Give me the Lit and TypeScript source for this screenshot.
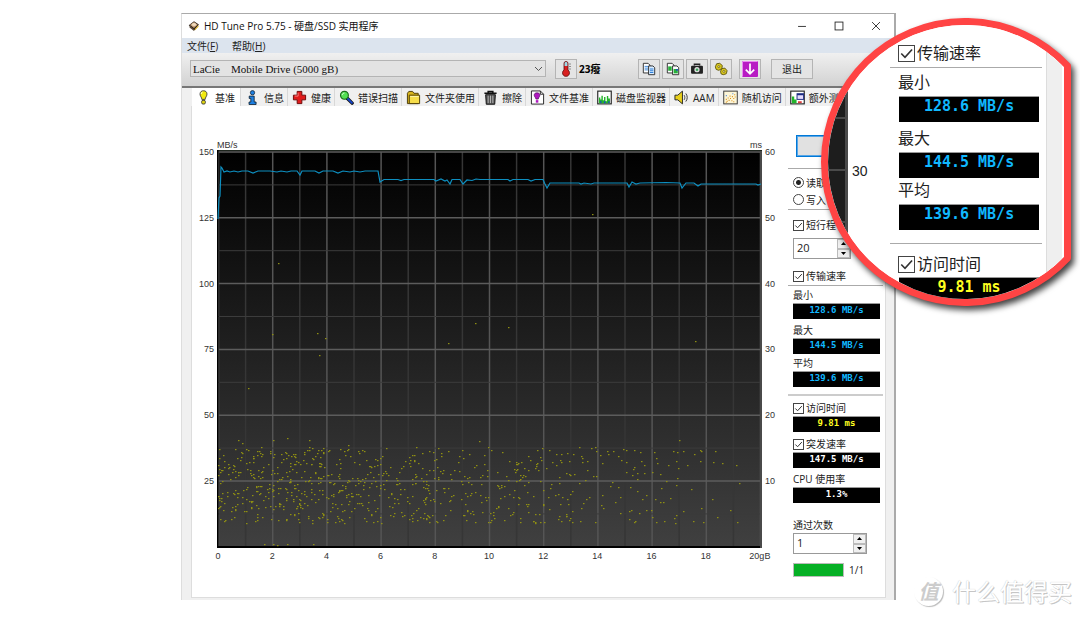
import { LitElement, html, svg, css, nothing } from "lit";
import { customElement, property } from "lit/decorators.js";
import { classMap } from "lit/directives/class-map.js";

/* ---------- icons, drawn on a 16 x 16 grid ---------- */

const icons: Record<string, unknown> = {
  app: svg`<path d="M1 7 8 1.5 14.5 6 8.5 14z" fill="#2c2118"/><path d="M2.6 6.8 8 2.8 13 6.2 8 10.6z" fill="#c9a27a"/><ellipse cx="8" cy="6" rx="2.8" ry="2" fill="#f0dcc0"/><path d="M2 8 8 12v2.5L2 10z" fill="#5b4a3a"/><path d="M9 12l5-5v2L9 14z" fill="#e0b429"/>`,
  bulb: svg`<path d="M8 .8c2.4 0 3.7 1.5 3.7 3.5 0 1.8-1 2.8-1.6 4.2-.3.8-.3 1.5-.3 1.5H6.2s0-.7-.3-1.5C5.300 7.1 4.300 6.1 4.300 4.300 4.300 2.300 5.600.8 8 .8z" fill="#f2ea10" stroke="#333" stroke-width=".9"/><path d="M7 2.2c-1 .3-1.5 1-1.5 2" stroke="#fff" fill="none"/><rect x="6" y="11" width="4" height="4" rx="1.5" fill="#e0d510" stroke="#333" stroke-width=".9"/>`,
  info: svg`<circle cx="8" cy="2.9" r="2.3" fill="#1d7fe0" stroke="#123" stroke-width=".8"/><path d="M4.5 6.500h5.300v6.300h2v2.700H4.300v-2.700h1.900V9H4.500z" fill="#1d7fe0" stroke="#123" stroke-width=".9"/>`,
  cross: svg`<path d="M5.500 1.500h5v4h4v5h-4v4h-5v-4h-4v-5h4z" fill="#e01c1c" stroke="#6a0808"/><path d="M6.500 3v3.500H3" stroke="#ff8080" fill="none"/>`,
  search: svg`<path d="M8.500 8.500 14 14" stroke="#111" stroke-width="3.6" stroke-linecap="round"/><path d="M9 9 13.800 13.800" stroke="#1848d0" stroke-width="2" stroke-linecap="round"/><circle cx="5.8" cy="5.6" r="4.2" fill="#52e052" stroke="#1c6a1c" stroke-width="1.2"/><path d="M3.500 5.500c0-1.400 1-2.200 2.200-2.200" stroke="#eaffea" fill="none"/>`,
  folder: svg`<path d="M1.500 14.500v-11l1.500-2h4l1.500 2H13v11z" fill="#d9b51c" stroke="#4a3a05"/><path d="M3.500 5.500h11v9h-11z" fill="#f6dd4a" stroke="#4a3a05"/><path d="M4.500 7h9" stroke="#fff6b0"/>`,
  trash: svg`<path d="M1.500 3.500h13M5.500 3V1.500h5V3" stroke="#111" stroke-width="1.6" fill="none"/><path d="M2.800 5h10.400l-.7 10.200h-9z" fill="#555" stroke="#111"/><path d="M5.500 6v8M8 6v8M10.500 6v8" stroke="#bbb" stroke-width="1"/>`,
  filebench: svg`<path d="M1.500 1h9.500l3.500 3.500V15h-13z" fill="#fff" stroke="#222"/><path d="M11 1v3.500h3.500" fill="none" stroke="#222"/><path d="M7.500 3c2.200 0 3 1.200 3 2.600 0 1.700-1.500 2.200-1.700 4.100H6.300c-.2-1.900-1.800-2.400-1.800-4.100C4.500 4.200 5.300 3 7.500 3z" fill="#b018c0" stroke="#4a0a52" stroke-width=".7"/><rect x="6.2" y="10.8" width="2.7" height="2.7" fill="#b018c0"/>`,
  monitor: svg`<rect x=".8" y="1.2" width="14.4" height="13.6" fill="#fff" stroke="#222" stroke-width="1.2"/><path d="M2 14V8h1.500v2h1.200V6h1.500v5h1.300V7.500H9V12h1.500V6.500H12V9h1.800v5z" fill="#23b52b"/><path d="M3.500 14v-2.500h1.200V14M7.500 14v-2H9v2M12 14v-2h1.300v2" fill="#1848c8"/>`,
  speaker: svg`<path d="M1 5.500h3L9 1.200v13.600L4 10.500H1z" fill="#e8cf1a" stroke="#222"/><path d="M10.800 5.500c1 1.500 1 3.500 0 5M12.600 3.700c2 2.600 2 6 0 8.600" stroke="#333" fill="none"/>`,
  scatter: svg`<rect x=".8" y="1.2" width="14.4" height="13.6" fill="#fdf6d8" stroke="#333"/><path d="M3 10h1M4 12h1M6 11h1M5 8.500h1M7.500 9h1M9 11.500h1M9.500 7h1M11 9h1M12 5h1M12.500 7.500h1M7 6.500h1M3 13h1M11 12.500h1" stroke="#d78a10" stroke-width="1.2"/><path d="M3 6h1M10 4h1" stroke="#3a7de0" stroke-width="1.2"/>`,
  extra: svg`<rect x=".8" y="1.2" width="14.4" height="13.6" fill="#fff" stroke="#222" stroke-width="1.2"/><path d="M2 14V7h2.500v3H7v4z" fill="#23b52b"/><rect x="7.5" y="4" width="7" height="6" fill="#e6dcff" stroke="#1a2a80"/><path d="M7.500 4.800h7" stroke="#1a2a80" stroke-width="1.6"/><path d="M8.500 12h4v2h-4z" fill="#e03c3c"/>`,
  thermo: svg`<path d="M6 2.500a2 2 0 0 1 4 0V9a3.500 3.500 0 1 1-4 0z" fill="#d82020" stroke="#5c1010" stroke-width=".8"/><path d="M6.600 2.500a1.400 1.400 0 0 1 2.800 0V5H6.600z" fill="#9adbe8"/><path d="M11 3h2M11 5.500h2M11 8h2" stroke="#777" stroke-width=".8"/>`,
  copy: svg`<path d="M1.500 1.500h5.500l2 2v9h-7.500z" fill="#fff" stroke="#222"/><path d="M3 5h4M3 7h4M3 9h4" stroke="#2f7fd8"/><path d="M7.500 4.500h5l2 2v8h-7z" fill="#d9ecff" stroke="#222"/><path d="M9 8h4M9 10h4M9 12h4" stroke="#2f7fd8" stroke-width="1.2"/>`,
  copyimg: svg`<path d="M1.500 1.500h5.500l2 2v9h-7.500z" fill="#fff" stroke="#222"/><path d="M2.500 5h4v5h-4z" fill="#27b03a"/><path d="M7.500 4.500h5l2 2v8h-7z" fill="#fff" stroke="#222"/><path d="M8.700 8h4.800v5H8.700z" fill="#27b03a"/><path d="M11.500 8h2v2h-2z" fill="#1c50c0"/>`,
  camera: svg`<path d="M5 4V2.500h6V4" fill="none" stroke="#222" stroke-width="1.6"/><rect x="1.2" y="4.2" width="13.6" height="9.3" rx="1.2" fill="#222"/><circle cx="8" cy="8.8" r="3" fill="#ddd"/><circle cx="8" cy="8.8" r="1.5" fill="#3aa85a"/>`,
  gears: svg`<g stroke="#5b5208" fill="#d8c61e"><path d="M1.500 5.500 3 2l3.500-.5L9.500 4 9 7.500 5.500 9.500 2.500 8.500z"/><path d="M7.500 10.500 9 7.500l3.500-.5 2.500 3-1 3.500-3.500 1L8 13.500z"/></g><circle cx="5.5" cy="5.3" r="1.1" fill="#fff8c0" stroke="#5b5208" stroke-width=".8"/><circle cx="11.3" cy="10.8" r="1.1" fill="#fff8c0" stroke="#5b5208" stroke-width=".8"/>`,
  down: svg`<rect width="16" height="16" rx="1" fill="#b81cc4"/><path d="M.5 15.500V.5h15" stroke="#e98af0" fill="none"/><path d="M8 2.500v10M3.800 8.600 8 12.800l4.200-4.200" stroke="#fff" stroke-width="1.7" fill="none"/>`,
  minimize: svg`<path d="M3.500 8.500h9" stroke="#222"/>`,
  maximize: svg`<rect x="3.5" y="3.5" width="9" height="9" fill="none" stroke="#222"/>`,
  close: svg`<path d="M3.500 3.500l9 9M12.500 3.500l-9 9" stroke="#222" fill="none"/>`,
};

const icon = (name: string) =>
  html`<svg class="icon" viewBox="0 0 16 16" aria-hidden="true">${icons[name]}</svg>`;

const controls = css`
  * {
    box-sizing: border-box;
  }
  .icon {
    display: block;
    flex: none;
    width: 15px;
    height: 15px;
  }
  .check {
    display: flex;
    align-items: center;
    gap: 2px;
    white-space: nowrap;
  }
  .check input {
    appearance: none;
    flex: none;
    width: 11px;
    height: 11px;
    margin: 0;
    border: 1px solid #444;
    background: #fff;
  }
  .check input[type="checkbox"]:checked {
    background: #fff
      url("data:image/svg+xml,%3Csvg xmlns='http://www.w3.org/2000/svg' viewBox='0 0 10 10'%3E%3Cpath d='M1.5 5 4 7.5 8.7 2.3' fill='none' stroke='%23333' stroke-width='1.1'/%3E%3C/svg%3E")
      center / 100% 100%;
  }
  .check input[type="radio"] {
    border-radius: 50%;
  }
  .check input[type="radio"]:checked {
    background: radial-gradient(circle, #222 0 2px, #fff 3px);
  }
  .rule {
    width: 100%;
    height: 1px;
    margin: 0;
    border: 0;
    background: #aaa;
  }
  .reading {
    display: block;
    background: #000;
    border-top: 1px solid #999;
    font-family: "DejaVu Sans Mono", monospace;
    font-weight: bold;
    text-align: center;
    white-space: nowrap;
    color: #10b8ff;
  }
  .reading.yellow {
    color: #ffff20;
  }
  .reading.white {
    color: #fff;
  }
`;

/* ---------- benchmark chart ---------- */

const trace: [number, number][] = [
  [1, 69], [2, 48], [3, 46], [4, 17], [5, 18], [7, 22], [10, 21], [13, 22], [17, 21], [21, 22], [25, 21],
  [31, 21], [36, 23], [41, 21], [53, 21], [60, 22], [64, 21], [70, 22], [74, 21], [80, 21], [83, 25], [85, 21],
  [98, 21], [102, 23], [106, 21], [116, 21], [121, 23], [126, 21], [133, 22], [137, 21], [143, 22], [148, 21],
  [161, 21], [163, 32], [167, 29.5], [181, 29.5], [184, 30.5], [187, 29.5], [217, 29.5], [219, 31], [224, 29],
  [228, 31], [230, 30], [233, 34], [235, 29.5], [243, 29.5], [246, 34], [250, 30], [255, 30.5], [259, 29],
  [263, 29.5], [291, 29.5], [293, 31], [296, 29.5], [311, 29.5], [314, 31], [318, 29.5], [326, 29.5],
  [328, 34], [330, 38], [333, 33], [362, 33], [364, 34], [367, 33], [374, 34], [377, 33], [410, 33], [412, 37],
  [415, 32], [419, 34], [423, 33], [449, 32.5], [463, 33], [465, 38], [469, 33], [477, 33], [481, 36], [484, 34],
  [539, 34], [541, 35], [544, 34],
];

const strays: [number, number][] = [
  [61, 113], [375, 64], [55, 184], [100, 183], [108, 188], [102, 205], [258, 173], [291, 177], [231, 193],
  [478, 191], [31, 238], [47, 394], [56, 394], [60, 395], [70, 394], [96, 394], [21, 290], [25, 293],
  [56, 290], [70, 288], [92, 290], [131, 295], [262, 291], [462, 290], [362, 297], [378, 297], [437, 302],
];

/* access-time samples per band: from, to, count */
const bands: [number, number, number][] = [
  [1, 54, 140], [54, 110, 160], [110, 163, 120], [163, 218, 110], [218, 272, 75],
  [272, 327, 85], [327, 381, 56], [381, 436, 44], [436, 490, 32], [490, 526, 9],
];

function accessSamples(): [number, number][] {
  let seed = 20;
  const next = () => {
    seed = (seed * 16807) % 2147483647;
    return seed / 2147483647;
  };
  const out: [number, number][] = [];
  for (const [from, to, count] of bands) {
    for (let i = 0; i < count; i++) {
      out.push([from + next() * (to - from), 297 + Math.pow(next(), 0.95) * 76]);
    }
  }
  return out;
}

@customElement("benchmark-chart")
export class BenchmarkChart extends LitElement {
  static styles = css`
    :host {
      display: grid;
      grid-template-columns: 22px minmax(0, 1fr) 11px;
      grid-template-rows: 10px 398px 14px;
      column-gap: 3px;
      font: 9px/10px "Liberation Sans", Arial, sans-serif;
      color: #333;
    }
    .units {
      grid-column: 2;
      display: flex;
      justify-content: space-between;
    }
    .scale {
      display: flex;
      flex-direction: column;
      justify-content: space-between;
      margin: -3px 0 -4px;
    }
    .left {
      grid-column: 1;
      text-align: right;
    }
    .scale span {
      height: 10px;
    }
    svg {
      display: block;
      width: 100%;
      height: 100%;
    }
    .distance {
      grid-column: 2;
      display: flex;
      justify-content: space-between;
      padding: 3px 2px 0 1px;
    }
    .distance span {
      display: flex;
      justify-content: center;
      width: 0;
      white-space: nowrap;
    }
  `;

  private samples = accessSamples();

  render() {
    const cols = Array.from({ length: 21 }, (_, i) => i);
    const rows = Array.from({ length: 13 }, (_, i) => i);
    return html`
      <div class="units"><span>MB/s</span><span>ms</span></div>
      <div class="scale left">
        ${[150, 125, 100, 75, 50, 25, ""].map((v) => html`<span>${v}</span>`)}
      </div>
      <svg viewBox="0 0 545 398" preserveAspectRatio="none" role="img" aria-label="MB/s">
        <defs>
          <linearGradient id="bg" x1="0" y1="0" x2="0" y2="1">
            <stop offset="0" stop-color="#000" />
            <stop offset="1" stop-color="#404040" />
          </linearGradient>
        </defs>
        <rect width="545" height="398" fill="url(#bg)" />
        ${cols.map((i) => {
          const x = 1.5 + i * 27.1;
          return svg`<line x1=${x} x2=${x} y1="2" y2="397" stroke=${i % 2 ? "#363636" : "#555"} stroke-width="1.5"/>`;
        })}
        ${rows.map((i) => {
          const y = 2 + i * 32.9;
          return svg`<line x1="1" x2="545" y1=${y} y2=${y} stroke=${i % 2 ? "#3c3c3c" : "#5c5c5c"} stroke-width=${i % 2 ? 1 : 1.5}/>`;
        })}
        <path d="M0 .5H545" stroke="#1c241c" />
        <path d="M.5 0V398M0 397H545" stroke="#000" stroke-width="2" fill="none" />
        <path d="M544 1V398" stroke="#4a4a4a" stroke-width="2" />
        ${[...strays, ...this.samples].map(
          ([x, y]) =>
            svg`<rect x=${Math.round(x)} y=${Math.round(y)} width="1.500" height="1.200" fill="#8f8f12"/>`
        )}
        <polyline
          points=${trace.map((p) => p.join(",")).join(" ")}
          fill="none"
          stroke="#0e8fc0"
          stroke-width="1.2"
        />
      </svg>
      <div class="scale">
        ${[60, 50, 40, 30, 20, 10, ""].map((v) => html`<span>${v}</span>`)}
      </div>
      <div class="distance">
        ${[0, 2, 4, 6, 8, 10, 12, 14, 16, 18, "20gB"].map((v) => html`<span>${v}</span>`)}
      </div>
    `;
  }
}

/* ---------- number box with up and down buttons ---------- */

@customElement("spin-box")
export class SpinBox extends LitElement {
  @property({ type: Number }) value = 0;
  @property() label = "";

  static styles = css`
    :host {
      display: flex;
      box-sizing: border-box;
      height: 21px;
      border: 1px solid #999;
      background: #fff;
    }
    input {
      flex: 1;
      min-width: 0;
      appearance: textfield;
      border: 0;
      padding: 0 3px 3px;
      background: none;
      font: 11px "Open Sans", sans-serif;
      color: #222;
    }
    input::-webkit-inner-spin-button {
      display: none;
    }
    .steps {
      display: grid;
      grid-template-rows: 1fr 1fr;
      width: 13px;
    }
    button {
      display: grid;
      place-items: center;
      padding: 0;
      border: 1px solid #bbb;
      background: #f0f0f0;
    }
    svg {
      width: 5px;
      height: 3px;
    }
  `;

  render() {
    return html`
      <input type="number" aria-label=${this.label} .value=${String(this.value)} />
      <span class="steps">
        <button aria-label="+" @click=${() => this.value++}>
          <svg viewBox="0 0 5 3"><path d="M0 3 2.5 0 5 3z" /></svg>
        </button>
        <button aria-label="-" @click=${() => this.value--}>
          <svg viewBox="0 0 5 3"><path d="M0 0 2.5 3 5 0z" /></svg>
        </button>
      </span>
    `;
  }
}

/* ---------- round magnifier over the results ---------- */

@customElement("magnifier-lens")
export class MagnifierLens extends LitElement {
  static styles = [
    controls,
    css`
      :host {
        display: block;
        width: 251px;
        height: 289px;
        font: 16px/22px "Open Sans", "Noto Sans CJK SC", sans-serif;
        color: #222;
      }
      .ring {
        position: absolute;
        inset: 0;
        overflow: visible;
        filter: drop-shadow(3px 4px 3px rgba(0, 0, 0, 0.75));
      }
      .glass {
        position: relative;
        display: grid;
        grid-template-columns: 27px 42px 152px 20px;
        height: 100%;
        background: #fff;
        clip-path: path("M243 49.3A137 137 0 1 0 243 238.7Z");
      }
      .plot {
        display: flex;
        flex-direction: column;
        gap: 50px;
        padding-top: 99px;
        background: #1d1d1d;
        border-right: 3px solid #4a4a4a;
      }
      .plot i {
        height: 2px;
        background: #4a4a4a;
      }
      .tick {
        padding: 142px 0 0 4px;
        font: 14px/22px "Liberation Sans", Arial, sans-serif;
      }
      .results {
        display: flex;
        flex-direction: column;
        padding-top: 25px;
      }
      .check {
        height: 20px;
        margin-left: 8px;
      }
      .check input {
        width: 17px;
        height: 17px;
      }
      .rule {
        margin: 4px 0 3px;
      }
      .rule.wide {
        margin: 12px 0 10px;
      }
      .name {
        padding-left: 8px;
      }
      .reading {
        flex: none;
        height: 26px;
        margin: 3px 3px 5px 9px;
        font-size: 15px;
        line-height: 19px;
      }
      .reading.close {
        margin-bottom: 1px;
      }
      .edge {
        margin-left: 4px;
        background: #efefef;
        border-left: 1px solid #ddd;
      }
    `,
  ];

  render() {
    return html`
      <svg class="ring" width="251" height="289" aria-hidden="true">
        <path
          d="M246.5 47.9A140.5 140.5 0 1 0 246.5 240.1Z"
          fill="#fff"
          stroke="#ff4444"
          stroke-width="7"
          stroke-linejoin="round"
        />
      </svg>
      <div class="glass">
        <div class="plot"><i></i><i></i><i></i></div>
        <div class="tick">30</div>
        <div class="results">
          <label class="check"><input type="checkbox" checked />传输速率</label>
          <hr class="rule" />
          <span class="name">最小</span><output class="reading">128.6 MB/s</output>
          <span class="name">最大</span><output class="reading close">144.5 MB/s</output>
          <span class="name">平均</span><output class="reading close">139.6 MB/s</output>
          <hr class="rule wide" />
          <label class="check"><input type="checkbox" checked />访问时间</label>
          <output class="reading yellow">9.81 ms</output>
        </div>
        <div class="edge"></div>
      </div>
    `;
  }
}

/* ---------- application window ---------- */

const tabs: [string, string][] = [
  ["bulb", "基准"],
  ["info", "信息"],
  ["cross", "健康"],
  ["search", "错误扫描"],
  ["folder", "文件夹使用"],
  ["trash", "擦除"],
  ["filebench", "文件基准"],
  ["monitor", "磁盘监视器"],
  ["speaker", "AAM"],
  ["scatter", "随机访问"],
  ["extra", "额外测试"],
];

@customElement("app-root")
export class AppRoot extends LitElement {
  static styles = [
    controls,
    css`
      :host {
        display: grid;
        grid-template-columns: minmax(0, 181fr) minmax(0, 715fr) minmax(184px, 184fr);
        position: relative;
        box-sizing: border-box;
        min-height: 100vh;
        overflow: hidden;
        padding-top: 13px;
        align-items: start;
        background: #fff;
        font: 10px/14px "Open Sans", "Noto Sans CJK SC", sans-serif;
        color: #222;
      }
      button {
        font: inherit;
        color: inherit;
      }
      .window {
        grid-column: 2;
        border: solid #aaa;
        border-width: 1px 2px 0 1px;
        border-left-color: #ddd;
        background: #f0f0f0;
      }
      .title {
        display: flex;
        align-items: center;
        height: 24px;
        padding-left: 6px;
        gap: 4px;
        background: #fff;
      }
      .title .icon {
        width: 12px;
        height: 12px;
      }
      .caption {
        flex: 1;
        margin: 0;
        font-size: 10px;
        font-weight: normal;
        color: #111;
      }
      .system {
        display: flex;
      }
      .system button {
        display: grid;
        place-items: center;
        width: 37px;
        height: 24px;
        padding: 0;
        border: 0;
        background: none;
      }
      .system .icon {
        width: 14px;
        height: 14px;
      }
      .menu {
        display: flex;
        gap: 14px;
        height: 15px;
        padding-left: 5px;
        background: #dce4ee;
      }
      .menu button {
        padding: 0;
        border: 0;
        background: none;
        line-height: 14px;
      }
      .toolbar {
        display: flex;
        align-items: center;
        height: 35px;
        padding: 0 81px 2px 8px;
        border-bottom: 2px solid #777;
        background: linear-gradient(#f0f0f0, #d2d2d2);
      }
      .drive {
        position: relative;
        flex: 1;
        min-width: 0;
      }
      .drive select {
        display: block;
        appearance: none;
        width: 100%;
        height: 17px;
        padding: 0 16px 0 2px;
        border: 1px solid #b4b4b4;
        border-radius: 0;
        background: #e3e3e3;
        font: 11px "Liberation Serif", serif;
        color: #111;
      }
      .drive svg {
        position: absolute;
        right: 3px;
        top: 6px;
        width: 9px;
        height: 6px;
        pointer-events: none;
      }
      .tool {
        display: grid;
        place-items: center;
        flex: none;
        width: 22px;
        height: 20px;
        padding: 0;
        border: 1px solid #b4b4b4;
        background: #e4e4e4;
      }
      .tool .icon {
        width: 14px;
        height: 14px;
      }
      .tool.heat {
        margin-left: 9px;
      }
      .tool.big .icon,
      .tool.heat .icon {
        width: 16px;
        height: 16px;
      }
      .degrees {
        width: 61px;
        padding-left: 2px;
        font-weight: bold;
        color: #000;
      }
      .tools {
        display: flex;
        gap: 2px;
        margin-right: 7px;
      }
      .exit {
        width: 42px;
        height: 20px;
        margin-left: 10px;
        padding: 0;
        border: 1px solid #b4b4b4;
        background: #e4e4e4;
      }
      .tabs {
        display: flex;
        height: 18px;
        padding-left: 10px;
        overflow: hidden;
      }
      .tab {
        display: flex;
        flex: none;
        align-items: center;
        gap: 4px;
        padding: 1px 3px 0 4px;
        border: 0;
        border-right: 1px solid #d8d8d8;
        background: #f0f0f0;
        white-space: nowrap;
      }
      .tab.active {
        padding-right: 5px;
        background: #fff;
      }
      .panel {
        display: flex;
        align-items: flex-start;
        margin: 0 8px 0 9px;
        border: solid #ddd;
        border-width: 0 1px 1px;
        background: #fff;
      }
      .footer {
        height: 2px;
      }
      benchmark-chart {
        flex: 1;
        min-width: 0;
        margin: 34px 12px 35px 0;
      }
      .side {
        display: flex;
        flex-direction: column;
        flex: none;
        width: 97px;
        padding: 29px 2px 0 0;
      }
      .side > * {
        flex: none;
      }
      .start {
        width: 78px;
        height: 22px;
        margin: 0 0 11px 8px;
        padding: 0;
        border: 1px solid #0078d7;
        outline: 1px solid #58a6e6;
        outline-offset: -2px;
        background: #e1e1e1;
      }
      .side .check,
      .name {
        margin-left: 5px;
      }
      .name {
        margin-top: 2px;
        margin-bottom: 1px;
      }
      .modes {
        padding: 5px 0 1px;
      }
      .modes .check {
        height: 17px;
      }
      .side .check.box {
        height: 16px;
      }
      .above {
        margin-top: 7px;
      }
      .gap {
        margin-top: 4px;
      }
      .reading {
        height: 16px;
        margin: 0 3px 0 5px;
        font-size: 9px;
        line-height: 12px;
      }
      .rule.below {
        margin-top: 1px;
      }
      .rule.thick {
        height: 2px;
        margin: 7px 0 4px;
        background: #ccc;
      }
      .narrow {
        width: 58px;
        margin: 5px 0 9px 5px;
      }
      .passes {
        margin-top: 15px;
      }
      .counter {
        width: 74px;
        margin: 0 0 9px 5px;
      }
      .progress {
        display: flex;
        align-items: center;
        gap: 5px;
        margin-left: 5px;
      }
      progress {
        appearance: none;
        width: 51px;
        height: 14px;
        border: 1px solid #bbb;
      }
      progress::-webkit-progress-bar {
        background: #e6e6e6;
      }
      progress::-webkit-progress-value {
        background: #06b025;
      }
      magnifier-lens {
        position: absolute;
        top: 18px;
        left: calc(83.8% - 84px);
      }
      .brand {
        grid-column: 3;
        align-self: end;
        display: flex;
        align-items: center;
        gap: 9px;
        padding: 0 0 10px 18px;
        font: 24px/32px "Noto Sans CJK SC", sans-serif;
        color: #fff;
        text-shadow: 1px 1px 0 #c6c6c6, 0 0 1px #bbb;
        white-space: nowrap;
      }
      .seal {
        display: grid;
        place-items: center;
        width: 29px;
        height: 29px;
        border-radius: 50%;
        box-shadow: 1px 1px 1px #bbb;
        font-size: 20px;
        line-height: 28px;
        font-style: italic;
        font-weight: bold;
        color: #ccc;
        text-shadow: none;
      }
    `,
  ];

  render() {
    return html`
      <main class="window">
        <header class="title">
          ${icon("app")}
          <h1 class="caption">HD Tune Pro 5.75 - 硬盘/SSD 实用程序</h1>
          <div class="system">
            <button aria-label="最小化">${icon("minimize")}</button>
            <button aria-label="最大化">${icon("maximize")}</button>
            <button aria-label="关闭">${icon("close")}</button>
          </div>
        </header>
        <nav class="menu">
          <button>文件(<u>F</u>)</button>
          <button>帮助(<u>H</u>)</button>
        </nav>
        <div class="toolbar">
          <div class="drive">
            <select aria-label="LaCie">
              <option>LaCie\u00a0\u00a0\u00a0\u00a0Mobile Drive (5000 gB)</option>
            </select>
            <svg viewBox="0 0 9 6" aria-hidden="true">
              <path d="M1 1 4.5 4.5 8 1" fill="none" stroke="#555" />
            </svg>
          </div>
          <button class="tool heat" aria-label="23癈">${icon("thermo")}</button>
          <span class="degrees">23癈</span>
          <div class="tools">
            ${["copy", "copyimg", "camera", "gears"].map(
              (name) => html`<button class="tool" aria-label=${name}>${icon(name)}</button>`
            )}
          </div>
          <button class="tool big" aria-label="down">${icon("down")}</button>
          <button class="exit">退出</button>
        </div>
        <div class="tabs" role="tablist">
          ${tabs.map(
            ([name, label], i) => html`<button
              role="tab"
              aria-selected=${i === 0}
              class=${classMap({ tab: true, active: i === 0 })}
            >
              ${icon(name)}${label}
            </button>`
          )}
        </div>
        <section class="panel">
          <benchmark-chart></benchmark-chart>
          <div class="side">
            <button class="start" aria-label="开始"></button>
            <hr class="rule" />
            <div class="modes">
              <label class="check"><input type="radio" name="mode" checked />读取</label>
              <label class="check"><input type="radio" name="mode" />写入</label>
            </div>
            <hr class="rule" />
            <label class="check box above"><input type="checkbox" checked />短行程</label>
            <spin-box class="narrow" label="短行程" .value=${20}></spin-box>
            <label class="check box"><input type="checkbox" checked />传输速率</label>
            <hr class="rule below" />
            ${this.reading("最小", "128.6 MB/s", "")}
            ${this.reading("最大", "144.5 MB/s", "", true)}
            ${this.reading("平均", "139.6 MB/s", "")}
            <hr class="rule thick" />
            <label class="check box"><input type="checkbox" checked />访问时间</label>
            ${this.reading("", "9.81 ms", "yellow")}
            <label class="check box gap"><input type="checkbox" checked />突发速率</label>
            ${this.reading("", "147.5 MB/s", "white")}
            ${this.reading("CPU 使用率", "1.3%", "white", true)}
            <span class="name passes">通过次数</span>
            <spin-box class="counter" label="通过次数" .value=${1}></spin-box>
            <div class="progress">
              <progress value="1" max="1" aria-label="1/1"></progress><span>1/1</span>
            </div>
          </div>
        </section>
        <div class="footer"></div>
      </main>
      <magnifier-lens></magnifier-lens>
      <footer class="brand"><span class="seal">值</span><span>什么值得买</span></footer>
    `;
  }

  private reading(name: string, value: string, tone: string, spaced = false) {
    return html`
      ${name ? html`<span class=${classMap({ name: true, gap: spaced })}>${name}</span>` : nothing}
      <output class=${`reading ${tone}`}>${value}</output>
    `;
  }
}
